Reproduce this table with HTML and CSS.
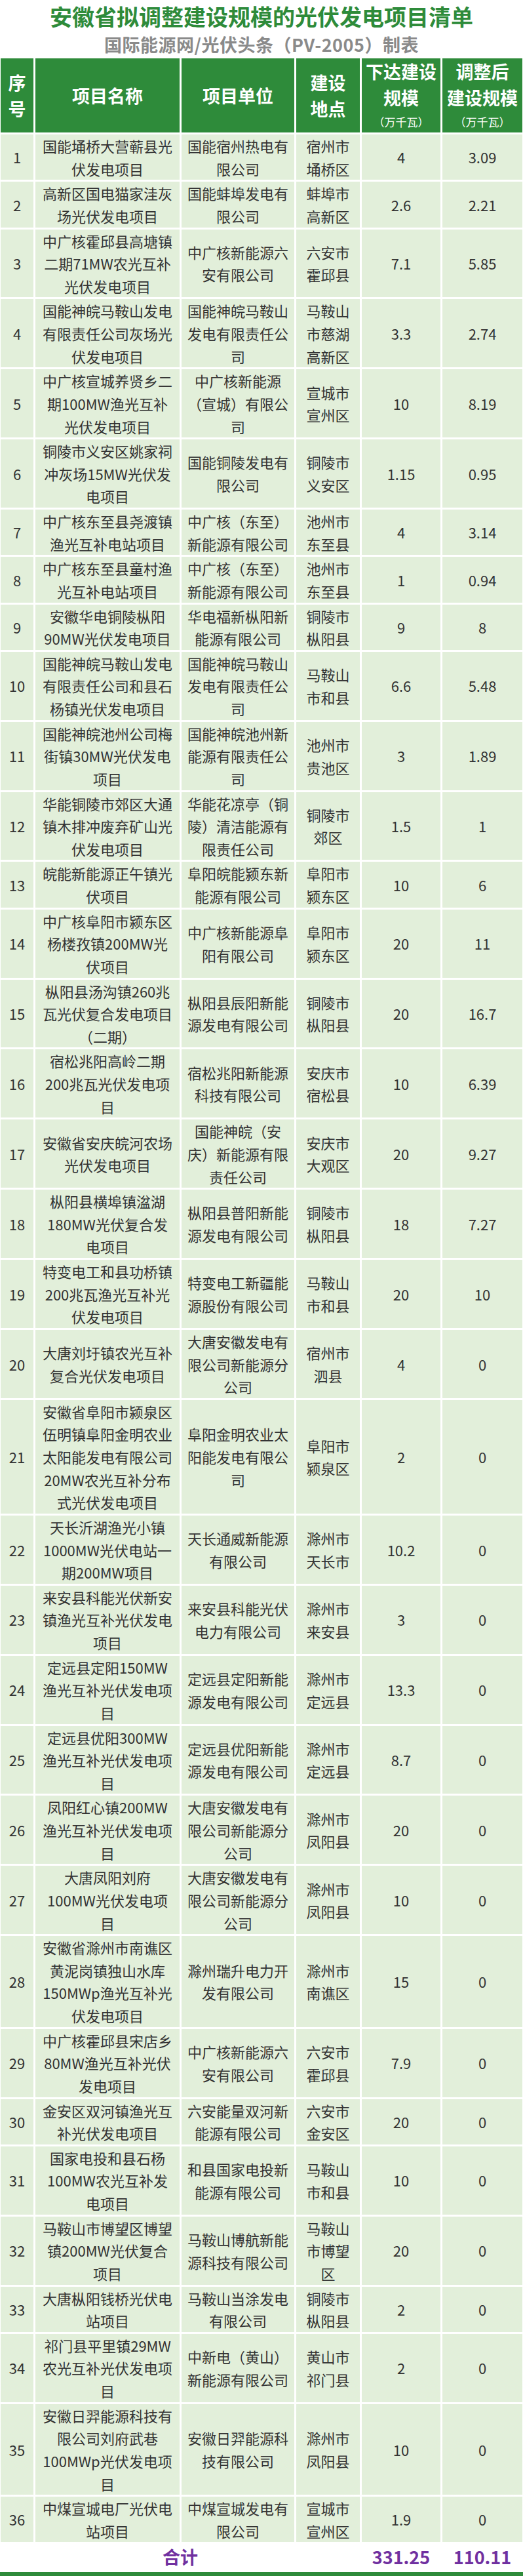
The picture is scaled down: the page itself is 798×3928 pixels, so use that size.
FILE: index.html
```html
<!DOCTYPE html>
<html lang="zh-CN">
<head>
<meta charset="utf-8">
<title>安徽省拟调整建设规模的光伏发电项目清单</title>
<link rel="stylesheet" href="styles.css">
</head>
<body>
<div class="page">
  <h1 class="title">安徽省拟调整建设规模的光伏发电项目清单</h1>
  <p class="subtitle">国际能源网/光伏头条（PV-2005）制表</p>
  <div class="table-wrap">
  <table class="list">
    <colgroup>
      <col class="c1"><col class="c2"><col class="c3"><col class="c4"><col class="c5"><col class="c6">
    </colgroup>
    <thead>
      <tr>
        <th class="hd"><div class="hl">序<br>号</div></th>
        <th class="hd"><div class="hl">项目名称</div></th>
        <th class="hd"><div class="hl">项目单位</div></th>
        <th class="hd"><div class="hl">建设<br>地点</div></th>
        <th class="hd"><div class="hl">下达建设<br>规模</div><div class="unit">（万千瓦）</div></th>
        <th class="hd"><div class="hl">调整后<br>建设规模</div><div class="unit">（万千瓦）</div></th>
      </tr>
    </thead>
    <tbody>
      <tr><td class="cell">1</td><td class="cell">国能埇桥大营蕲县光<br>伏发电项目</td><td class="cell">国能宿州热电有<br>限公司</td><td class="cell">宿州市<br>埇桥区</td><td class="cell">4</td><td class="cell">3.09</td></tr>
      <tr><td class="cell">2</td><td class="cell">高新区国电猫家洼灰<br>场光伏发电项目</td><td class="cell">国能蚌埠发电有<br>限公司</td><td class="cell">蚌埠市<br>高新区</td><td class="cell">2.6</td><td class="cell">2.21</td></tr>
      <tr><td class="cell">3</td><td class="cell">中广核霍邱县高塘镇<br>二期71MW农光互补<br>光伏发电项目</td><td class="cell">中广核新能源六<br>安有限公司</td><td class="cell">六安市<br>霍邱县</td><td class="cell">7.1</td><td class="cell">5.85</td></tr>
      <tr><td class="cell">4</td><td class="cell">国能神皖马鞍山发电<br>有限责任公司灰场光<br>伏发电项目</td><td class="cell">国能神皖马鞍山<br>发电有限责任公<br>司</td><td class="cell">马鞍山<br>市慈湖<br>高新区</td><td class="cell">3.3</td><td class="cell">2.74</td></tr>
      <tr><td class="cell">5</td><td class="cell">中广核宣城养贤乡二<br>期100MW渔光互补<br>光伏发电项目</td><td class="cell">中广核新能源<br>（宣城）有限公<br>司</td><td class="cell">宣城市<br>宣州区</td><td class="cell">10</td><td class="cell">8.19</td></tr>
      <tr><td class="cell">6</td><td class="cell">铜陵市义安区姚家祠<br>冲灰场15MW光伏发<br>电项目</td><td class="cell">国能铜陵发电有<br>限公司</td><td class="cell">铜陵市<br>义安区</td><td class="cell">1.15</td><td class="cell">0.95</td></tr>
      <tr><td class="cell">7</td><td class="cell">中广核东至县尧渡镇<br>渔光互补电站项目</td><td class="cell">中广核（东至）<br>新能源有限公司</td><td class="cell">池州市<br>东至县</td><td class="cell">4</td><td class="cell">3.14</td></tr>
      <tr><td class="cell">8</td><td class="cell">中广核东至县童村渔<br>光互补电站项目</td><td class="cell">中广核（东至）<br>新能源有限公司</td><td class="cell">池州市<br>东至县</td><td class="cell">1</td><td class="cell">0.94</td></tr>
      <tr><td class="cell">9</td><td class="cell">安徽华电铜陵枞阳<br>90MW光伏发电项目</td><td class="cell">华电福新枞阳新<br>能源有限公司</td><td class="cell">铜陵市<br>枞阳县</td><td class="cell">9</td><td class="cell">8</td></tr>
      <tr><td class="cell">10</td><td class="cell">国能神皖马鞍山发电<br>有限责任公司和县石<br>杨镇光伏发电项目</td><td class="cell">国能神皖马鞍山<br>发电有限责任公<br>司</td><td class="cell">马鞍山<br>市和县</td><td class="cell">6.6</td><td class="cell">5.48</td></tr>
      <tr><td class="cell">11</td><td class="cell">国能神皖池州公司梅<br>街镇30MW光伏发电<br>项目</td><td class="cell">国能神皖池州新<br>能源有限责任公<br>司</td><td class="cell">池州市<br>贵池区</td><td class="cell">3</td><td class="cell">1.89</td></tr>
      <tr><td class="cell">12</td><td class="cell">华能铜陵市郊区大通<br>镇木排冲废弃矿山光<br>伏发电项目</td><td class="cell">华能花凉亭（铜<br>陵）清洁能源有<br>限责任公司</td><td class="cell">铜陵市<br>郊区</td><td class="cell">1.5</td><td class="cell">1</td></tr>
      <tr><td class="cell">13</td><td class="cell">皖能新能源正午镇光<br>伏项目</td><td class="cell">阜阳皖能颍东新<br>能源有限公司</td><td class="cell">阜阳市<br>颍东区</td><td class="cell">10</td><td class="cell">6</td></tr>
      <tr><td class="cell">14</td><td class="cell">中广核阜阳市颍东区<br>杨楼孜镇200MW光<br>伏项目</td><td class="cell">中广核新能源阜<br>阳有限公司</td><td class="cell">阜阳市<br>颍东区</td><td class="cell">20</td><td class="cell">11</td></tr>
      <tr><td class="cell">15</td><td class="cell">枞阳县汤沟镇260兆<br>瓦光伏复合发电项目<br>（二期）</td><td class="cell">枞阳县辰阳新能<br>源发电有限公司</td><td class="cell">铜陵市<br>枞阳县</td><td class="cell">20</td><td class="cell">16.7</td></tr>
      <tr><td class="cell">16</td><td class="cell">宿松兆阳高岭二期<br>200兆瓦光伏发电项<br>目</td><td class="cell">宿松兆阳新能源<br>科技有限公司</td><td class="cell">安庆市<br>宿松县</td><td class="cell">10</td><td class="cell">6.39</td></tr>
      <tr><td class="cell">17</td><td class="cell">安徽省安庆皖河农场<br>光伏发电项目</td><td class="cell">国能神皖（安<br>庆）新能源有限<br>责任公司</td><td class="cell">安庆市<br>大观区</td><td class="cell">20</td><td class="cell">9.27</td></tr>
      <tr><td class="cell">18</td><td class="cell">枞阳县横埠镇湓湖<br>180MW光伏复合发<br>电项目</td><td class="cell">枞阳县普阳新能<br>源发电有限公司</td><td class="cell">铜陵市<br>枞阳县</td><td class="cell">18</td><td class="cell">7.27</td></tr>
      <tr><td class="cell">19</td><td class="cell">特变电工和县功桥镇<br>200兆瓦渔光互补光<br>伏发电项目</td><td class="cell">特变电工新疆能<br>源股份有限公司</td><td class="cell">马鞍山<br>市和县</td><td class="cell">20</td><td class="cell">10</td></tr>
      <tr><td class="cell">20</td><td class="cell">大唐刘圩镇农光互补<br>复合光伏发电项目</td><td class="cell">大唐安徽发电有<br>限公司新能源分<br>公司</td><td class="cell">宿州市<br>泗县</td><td class="cell">4</td><td class="cell">0</td></tr>
      <tr><td class="cell">21</td><td class="cell">安徽省阜阳市颍泉区<br>伍明镇阜阳金明农业<br>太阳能发电有限公司<br>20MW农光互补分布<br>式光伏发电项目</td><td class="cell">阜阳金明农业太<br>阳能发电有限公<br>司</td><td class="cell">阜阳市<br>颍泉区</td><td class="cell">2</td><td class="cell">0</td></tr>
      <tr><td class="cell">22</td><td class="cell">天长沂湖渔光小镇<br>1000MW光伏电站一<br>期200MW项目</td><td class="cell">天长通威新能源<br>有限公司</td><td class="cell">滁州市<br>天长市</td><td class="cell">10.2</td><td class="cell">0</td></tr>
      <tr><td class="cell">23</td><td class="cell">来安县科能光伏新安<br>镇渔光互补光伏发电<br>项目</td><td class="cell">来安县科能光伏<br>电力有限公司</td><td class="cell">滁州市<br>来安县</td><td class="cell">3</td><td class="cell">0</td></tr>
      <tr><td class="cell">24</td><td class="cell">定远县定阳150MW<br>渔光互补光伏发电项<br>目</td><td class="cell">定远县定阳新能<br>源发电有限公司</td><td class="cell">滁州市<br>定远县</td><td class="cell">13.3</td><td class="cell">0</td></tr>
      <tr><td class="cell">25</td><td class="cell">定远县优阳300MW<br>渔光互补光伏发电项<br>目</td><td class="cell">定远县优阳新能<br>源发电有限公司</td><td class="cell">滁州市<br>定远县</td><td class="cell">8.7</td><td class="cell">0</td></tr>
      <tr><td class="cell">26</td><td class="cell">凤阳红心镇200MW<br>渔光互补光伏发电项<br>目</td><td class="cell">大唐安徽发电有<br>限公司新能源分<br>公司</td><td class="cell">滁州市<br>凤阳县</td><td class="cell">20</td><td class="cell">0</td></tr>
      <tr><td class="cell">27</td><td class="cell">大唐凤阳刘府<br>100MW光伏发电项<br>目</td><td class="cell">大唐安徽发电有<br>限公司新能源分<br>公司</td><td class="cell">滁州市<br>凤阳县</td><td class="cell">10</td><td class="cell">0</td></tr>
      <tr><td class="cell">28</td><td class="cell">安徽省滁州市南谯区<br>黄泥岗镇独山水库<br>150MWp渔光互补光<br>伏发电项目</td><td class="cell">滁州瑞升电力开<br>发有限公司</td><td class="cell">滁州市<br>南谯区</td><td class="cell">15</td><td class="cell">0</td></tr>
      <tr><td class="cell">29</td><td class="cell">中广核霍邱县宋店乡<br>80MW渔光互补光伏<br>发电项目</td><td class="cell">中广核新能源六<br>安有限公司</td><td class="cell">六安市<br>霍邱县</td><td class="cell">7.9</td><td class="cell">0</td></tr>
      <tr><td class="cell">30</td><td class="cell">金安区双河镇渔光互<br>补光伏发电项目</td><td class="cell">六安能量双河新<br>能源有限公司</td><td class="cell">六安市<br>金安区</td><td class="cell">20</td><td class="cell">0</td></tr>
      <tr><td class="cell">31</td><td class="cell">国家电投和县石杨<br>100MW农光互补发<br>电项目</td><td class="cell">和县国家电投新<br>能源有限公司</td><td class="cell">马鞍山<br>市和县</td><td class="cell">10</td><td class="cell">0</td></tr>
      <tr><td class="cell">32</td><td class="cell">马鞍山市博望区博望<br>镇200MW光伏复合<br>项目</td><td class="cell">马鞍山博航新能<br>源科技有限公司</td><td class="cell">马鞍山<br>市博望<br>区</td><td class="cell">20</td><td class="cell">0</td></tr>
      <tr><td class="cell">33</td><td class="cell">大唐枞阳钱桥光伏电<br>站项目</td><td class="cell">马鞍山当涂发电<br>有限公司</td><td class="cell">铜陵市<br>枞阳县</td><td class="cell">2</td><td class="cell">0</td></tr>
      <tr><td class="cell">34</td><td class="cell">祁门县平里镇29MW<br>农光互补光伏发电项<br>目</td><td class="cell">中新电（黄山）<br>新能源有限公司</td><td class="cell">黄山市<br>祁门县</td><td class="cell">2</td><td class="cell">0</td></tr>
      <tr><td class="cell">35</td><td class="cell">安徽日羿能源科技有<br>限公司刘府武巷<br>100MWp光伏发电项<br>目</td><td class="cell">安徽日羿能源科<br>技有限公司</td><td class="cell">滁州市<br>凤阳县</td><td class="cell">10</td><td class="cell">0</td></tr>
      <tr><td class="cell">36</td><td class="cell">中煤宣城电厂光伏电<br>站项目</td><td class="cell">中煤宣城发电有<br>限公司</td><td class="cell">宣城市<br>宣州区</td><td class="cell">1.9</td><td class="cell">0</td></tr>
      <tr><td class="total" colspan="4">合计</td><td class="total">331.25</td><td class="total">110.11</td></tr>
    </tbody>
  </table>
  </div>
  <div class="bar"></div>
</div>
</body>
</html>
```

FILE: styles.css
```css
html, body {
  margin: 0;
  padding: 0;
  background: #ffffff;
}

body {
  font-family: "Noto Sans CJK SC", "Noto Sans", sans-serif;
}

.page {
  width: 798px;
  overflow: hidden;
}

.title {
  margin: 0;
  padding-top: 4px;
  text-align: center;
  font-size: 34px;
  line-height: 42px;
  font-weight: 700;
  color: #2e8b3a;
}

.subtitle {
  margin: 4px 0 0;
  text-align: center;
  font-size: 27px;
  line-height: 36px;
  font-weight: 700;
  letter-spacing: 0.5px;
  color: #8a8a8a;
}

.table-wrap {
  width: 798px;
  overflow: hidden;
}

.list {
  border-collapse: separate;
  border-spacing: 3px;
  table-layout: fixed;
  width: 802px;
  margin-left: -2px;
}

.c1 { width: 50px; }
.c2 { width: 220px; }
.c3 { width: 172px; }
.c4 { width: 97px; }
.c5 { width: 120px; }
.c6 { width: 122px; }

.hd {
  background: #2e8b3a;
  color: #ffffff;
  font-weight: 700;
  font-size: 27px;
  padding: 0;
  text-align: center;
  vertical-align: middle;
  white-space: nowrap;
}

.hl {
  line-height: 40px;
}

.unit {
  font-weight: 400;
  font-size: 17px;
  line-height: 33px;
}

.cell {
  background: #e2efda;
  color: #333333;
  font-size: 22px;
  line-height: 34.62px;
  padding: 0;
  text-align: center;
  vertical-align: middle;
  white-space: nowrap;
}

.total {
  background: #ffffff;
  color: #7030a0;
  font-weight: 700;
  font-size: 27px;
  line-height: 40px;
  padding: 0;
  text-align: center;
  vertical-align: middle;
}

.bar {
  height: 12px;
  background: #2e8b3a;
}
```
